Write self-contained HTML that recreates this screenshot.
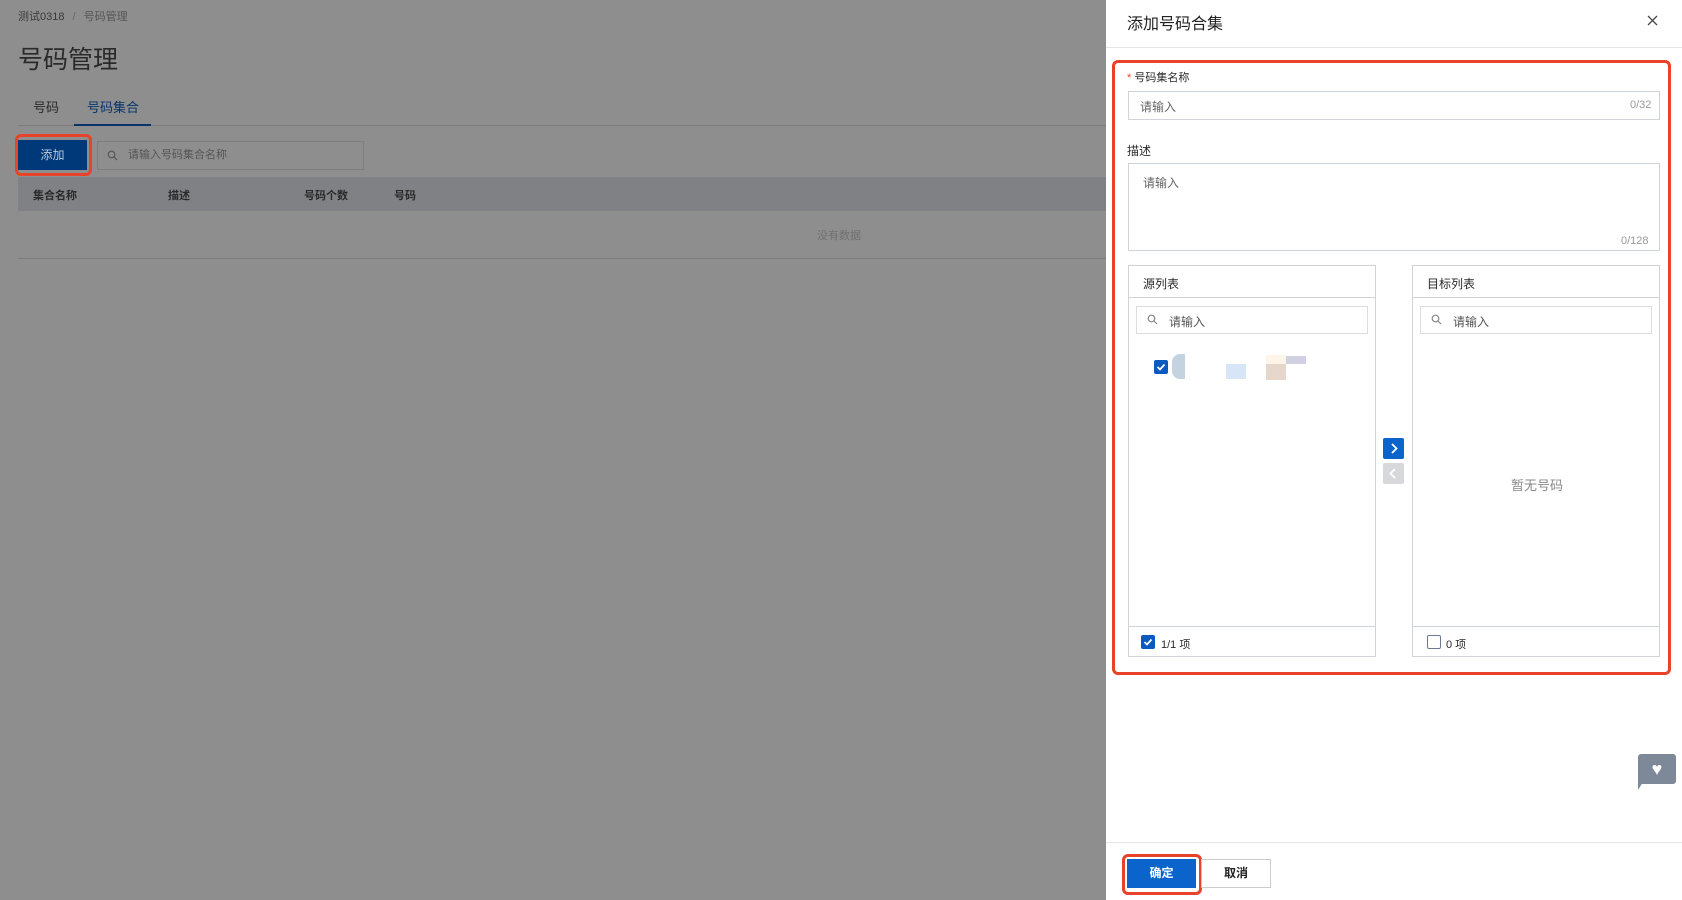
<!DOCTYPE html>
<html><head><meta charset="utf-8"><style>
*{box-sizing:border-box;margin:0;padding:0}
body{width:1682px;height:900px;overflow:hidden;position:relative;background:#8e8e8e;font-family:"Liberation Sans","Noto Sans CJK SC",sans-serif;font-size:12px;color:#2a2a2a}
.a{position:absolute}
.panel{left:1106px;top:0;width:576px;height:900px;background:#fff}
.ph{color:#999}
.box{border:1px solid #d0d3d8;background:#fff}
.red{border:3px solid #e8422a;border-radius:6px}
.srch{width:11px;height:11px}
</style></head><body>
<div class="a" style="left:18px;top:8px;color:#3a3a3a;font-size:11px">测试0318 <span style="color:#666;margin:0 5px">/</span> <span style="color:#555">号码管理</span></div>
<div class="a" style="left:18px;top:40px;font-size:25px;color:#2a2a2a">号码管理</div>
<div class="a" style="left:33px;top:97px;font-size:13px;color:#2a2a2a">号码</div>
<div class="a" style="left:87px;top:97px;font-size:13px;color:#08346a">号码集合</div>
<div class="a" style="left:18px;top:125px;width:1088px;height:1px;background:#7c7c7c"></div>
<div class="a" style="left:74px;top:124px;width:77px;height:2px;background:#08346a"></div>
<div class="a red" style="left:15px;top:134px;width:77px;height:42px"></div>
<div class="a" style="left:18px;top:140px;width:69px;height:30px;background:#00397a;color:#bcc8d8;text-align:center;line-height:30px;font-size:12px">添加</div>
<div class="a" style="left:97px;top:141px;width:267px;height:29px;border:1px solid #7e7e7e;background:#8e8e8e;color:#555;line-height:27px;padding-left:30px;font-size:11px">请输入号码集合名称</div>
<svg class="a srch" style="left:107px;top:150px" viewBox="0 0 11 11"><circle cx="4.5" cy="4.5" r="3.3" fill="none" stroke="#555" stroke-width="1.2"/><path d="M7 7l3 3" stroke="#555" stroke-width="1.2"/></svg>
<div class="a" style="left:18px;top:177px;width:1088px;height:34px;background:#7f8185"></div>
<div class="a" style="left:33px;top:187px;font-weight:bold;color:#2a2a2a;font-size:11px">集合名称</div>
<div class="a" style="left:168px;top:187px;font-weight:bold;color:#2a2a2a;font-size:11px">描述</div>
<div class="a" style="left:304px;top:187px;font-weight:bold;color:#2a2a2a;font-size:11px">号码个数</div>
<div class="a" style="left:394px;top:187px;font-weight:bold;color:#2a2a2a;font-size:11px">号码</div>
<div class="a" style="left:817px;top:227px;color:#707070;font-size:11px">没有数据</div>
<div class="a" style="left:18px;top:258px;width:1088px;height:1px;background:#7c7c7c"></div>

<div class="a panel"></div>
<div class="a" style="left:1127px;top:10px;font-size:16px;color:#222">添加号码合集</div>
<svg class="a" style="left:1647px;top:15px" width="11" height="11" viewBox="0 0 11 11"><path d="M1 1l9 9M10 1l-9 9" stroke="#444" stroke-width="1.3"/></svg>
<div class="a" style="left:1106px;top:47px;width:576px;height:1px;background:#e4e4e4"></div>
<div class="a red" style="left:1112px;top:60px;width:559px;height:615px"></div>
<div class="a" style="left:1127px;top:69px;font-size:11px"><span style="color:#e8422a">*</span> 号码集名称</div>
<div class="a box" style="left:1128px;top:91px;width:532px;height:29px"></div>
<div class="a ph" style="left:1140px;top:98px;color:#666">请输入</div>
<div class="a ph" style="left:1630px;top:99px;font-size:11px">0/32</div>
<div class="a" style="left:1127px;top:142px">描述</div>
<div class="a box" style="left:1128px;top:163px;width:532px;height:88px"></div>
<div class="a ph" style="left:1143px;top:174px;color:#666">请输入</div>
<div class="a ph" style="left:1621px;top:235px;font-size:11px">0/128</div>

<div class="a box" style="left:1128px;top:265px;width:248px;height:392px"></div>
<div class="a" style="left:1128px;top:297px;width:248px;height:1px;background:#d0d3d8"></div>
<div class="a" style="left:1128px;top:626px;width:248px;height:1px;background:#d0d3d8"></div>
<div class="a" style="left:1143px;top:275px">源列表</div>
<div class="a" style="left:1136px;top:306px;width:232px;height:28px;border:1px solid #dcdcdc"></div>
<svg class="a srch" style="left:1147px;top:314px" viewBox="0 0 11 11"><circle cx="4.5" cy="4.5" r="3.3" fill="none" stroke="#888" stroke-width="1.2"/><path d="M7 7l3 3" stroke="#888" stroke-width="1.2"/></svg>
<div class="a" style="left:1169px;top:313px;color:#555">请输入</div>
<svg class="a" style="left:1154px;top:360px" width="14" height="14" viewBox="0 0 14 14"><rect width="14" height="14" rx="2" fill="#0a5ac2"/><path d="M3.5 7l2.5 2.5 4.5-5" fill="none" stroke="#fff" stroke-width="1.8"/></svg>
<div class="a" style="left:1172px;top:354px;width:13px;height:25px;background:#c5d2e0;border-radius:8px 0 0 8px"></div>
<div class="a" style="left:1226px;top:364px;width:20px;height:15px;background:#d6e6f6"></div>
<div class="a" style="left:1266px;top:355px;width:20px;height:9px;background:#fdf6e8"></div>
<div class="a" style="left:1266px;top:364px;width:20px;height:16px;background:#e6d6cc"></div>
<div class="a" style="left:1286px;top:356px;width:20px;height:8px;background:#cfd0e2"></div>
<svg class="a" style="left:1141px;top:635px" width="14" height="14" viewBox="0 0 14 14"><rect width="14" height="14" rx="2" fill="#0a5ac2"/><path d="M3.5 7l2.5 2.5 4.5-5" fill="none" stroke="#fff" stroke-width="1.8"/></svg>
<div class="a" style="left:1161px;top:636px;font-size:11px">1/1 项</div>

<div class="a" style="left:1383px;top:438px;width:21px;height:21px;background:#0a64cc;border-radius:2px"></div>
<svg class="a" style="left:1383px;top:438px" width="21" height="21" viewBox="0 0 21 21"><path d="M9 6l4.5 4.5L9 15" fill="none" stroke="#fff" stroke-width="1.8"/></svg>
<div class="a" style="left:1383px;top:463px;width:21px;height:21px;background:#d6d8dc;border-radius:2px"></div>
<svg class="a" style="left:1383px;top:463px" width="21" height="21" viewBox="0 0 21 21"><path d="M12 6l-4.5 4.5L12 15" fill="none" stroke="#fff" stroke-width="1.8"/></svg>

<div class="a box" style="left:1412px;top:265px;width:248px;height:392px"></div>
<div class="a" style="left:1412px;top:297px;width:248px;height:1px;background:#d0d3d8"></div>
<div class="a" style="left:1412px;top:626px;width:248px;height:1px;background:#d0d3d8"></div>
<div class="a" style="left:1427px;top:275px">目标列表</div>
<div class="a" style="left:1420px;top:306px;width:232px;height:28px;border:1px solid #dcdcdc"></div>
<svg class="a srch" style="left:1431px;top:314px" viewBox="0 0 11 11"><circle cx="4.5" cy="4.5" r="3.3" fill="none" stroke="#888" stroke-width="1.2"/><path d="M7 7l3 3" stroke="#888" stroke-width="1.2"/></svg>
<div class="a" style="left:1453px;top:313px;color:#555">请输入</div>
<div class="a" style="left:1511px;top:475px;color:#888;font-size:13px">暂无号码</div>
<div class="a" style="left:1427px;top:635px;width:14px;height:14px;border:1px solid #6a7a90;border-radius:2px"></div>
<div class="a" style="left:1446px;top:636px;font-size:11px">0 项</div>

<div class="a" style="left:1638px;top:754px;width:38px;height:30px;background:#7d8898;border-radius:3px;color:#fff;text-align:center;line-height:30px;font-size:18px">♥</div>
<div class="a" style="left:1638px;top:782px;width:0;height:0;border-left:5px solid #7d8898;border-bottom:8px solid transparent"></div>

<div class="a" style="left:1106px;top:842px;width:576px;height:1px;background:#e4e4e4"></div>
<div class="a red" style="left:1122px;top:854px;width:80px;height:41px"></div>
<div class="a" style="left:1127px;top:859px;width:69px;height:29px;background:#0a64cc;color:#fff;text-align:center;line-height:29px;font-weight:bold">确定</div>
<div class="a" style="left:1201px;top:859px;width:70px;height:29px;border:1px solid #ccc;text-align:center;line-height:27px;font-weight:bold;color:#222">取消</div>
</body></html>
